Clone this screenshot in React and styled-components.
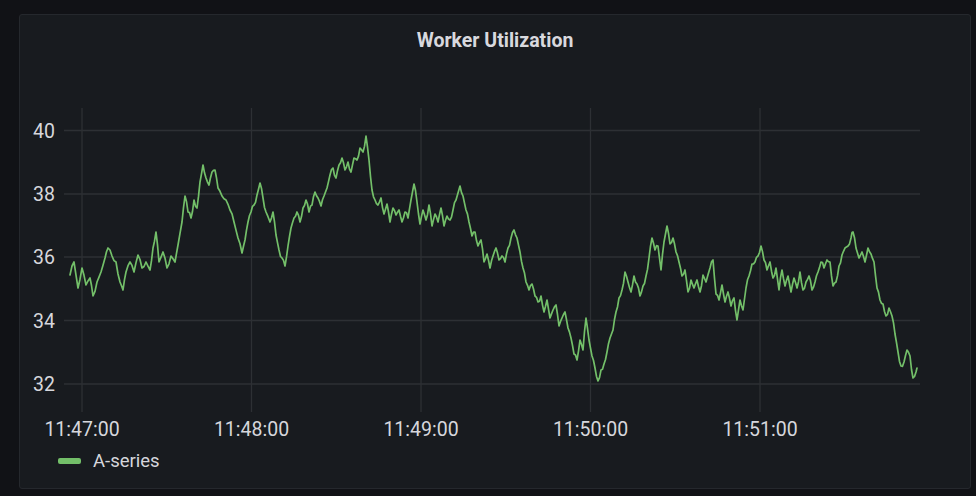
import React from "react";
import styled, { createGlobalStyle } from "styled-components";

const Global = createGlobalStyle`
  html, body { margin: 0; padding: 0; background: #111216; }
  body { font-family: Roboto, "Liberation Sans", sans-serif; }
`;

const Page = styled.div`
  width: 976px;
  height: 496px;
  box-sizing: border-box;
  padding: 14px 5px 0 19px;
  background: #111216;
`;

const Panel = styled.div`
  width: 952px;
  height: 475px;
  box-sizing: border-box;
  background: #181b1f;
  border: 1px solid #25282d;
  border-radius: 3px;
  display: flex;
  flex-direction: column;
`;

const Header = styled.div`
  padding-top: 14px;
  height: 24px;
  display: flex;
  justify-content: center;
`;

const Title = styled.h2`
  margin: 0;
  font-family: Roboto, "Liberation Sans", sans-serif;
  font-weight: 700;
  font-size: 19.5px;
  line-height: 24px;
  color: #d8d9de;
`;

const ChartSvg = styled.svg`
  display: block;
  margin-top: 47px;
  flex: none;
`;

const AxisText = styled.text`
  font-family: Roboto, "Liberation Sans", sans-serif;
  font-size: 19.5px;
  fill: #d6d7dc;
`;

const Legend = styled.div`
  margin-top: 6px;
  height: 20px;
  padding-left: 38px;
  display: flex;
  align-items: center;
  gap: 12px;
`;

const Swatch = styled.span`
  width: 23px;
  height: 6px;
  border-radius: 2px;
  background: ${(p) => p.$color};
`;

const LegendLabel = styled.span`
  font-size: 18.5px;
  color: #d6d7dc;
  font-family: Roboto, "Liberation Sans", sans-serif;
`;

const KEY = [
  [70,275],[74,262],[78,288],[82,268],[86,285],[90,278],[93,296],[97,282],[101,272],[105,258],[108,248],[112,256],[116,262],[120,282],[123,290],[126,272],[130,262],[134,272],[138,255],[142,268],[146,262],[150,270],[153,248],[156,232],[159,262],[163,252],[167,268],[171,256],[175,262],[178,245],[182,222],[185,196],[188,212],[191,218],[194,200],[197,208],[200,182],[203,165],[206,178],[209,185],[212,172],[215,170],[218,188],[222,196],[226,200],[230,210],[234,222],[238,238],[242,253],[245,240],[248,222],[251,212],[254,205],[257,195],[260,183],[263,198],[266,212],[270,222],[273,212],[276,235],[279,250],[282,258],[285,266],[288,246],[291,228],[294,218],[297,212],[300,222],[303,208],[306,200],[309,212],[312,205],[315,192],[318,198],[321,206],[324,196],[327,188],[330,175],[333,168],[336,178],[339,165],[342,158],[345,170],[348,162],[351,172],[354,158],[357,160],[360,148],[363,152],[366,136],[369,160],[372,190],[375,200],[378,205],[381,198],[384,214],[387,204],[390,222],[393,208],[396,215],[399,210],[402,222],[405,212],[408,218],[411,200],[414,184],[417,202],[420,224],[423,210],[426,220],[429,205],[432,226],[435,214],[438,222],[441,208],[444,226],[447,216],[450,220],[453,210],[456,200],[460,186],[463,196],[466,210],[469,222],[472,236],[475,232],[478,246],[481,240],[484,262],[487,254],[490,268],[493,256],[496,248],[499,260],[502,256],[505,262],[508,248],[511,238],[514,230],[517,238],[520,252],[523,268],[526,282],[529,290],[532,284],[535,296],[538,302],[541,296],[544,312],[547,300],[550,318],[553,310],[556,305],[559,326],[562,318],[565,312],[568,328],[571,338],[574,354],[577,360],[580,340],[583,350],[586,318],[589,340],[592,356],[595,368],[598,381],[601,370],[604,364],[607,352],[610,338],[613,330],[616,312],[619,298],[622,290],[625,272],[628,282],[631,292],[634,276],[637,284],[640,296],[643,286],[646,276],[649,258],[652,238],[655,250],[658,246],[661,270],[664,242],[667,226],[670,244],[673,238],[676,252],[679,262],[682,276],[685,270],[688,292],[691,280],[694,288],[697,280],[700,292],[703,275],[706,282],[710,268],[713,260],[716,294],[719,300],[722,285],[725,302],[728,292],[731,306],[734,298],[737,320],[740,300],[743,310],[746,288],[749,276],[752,264],[755,262],[758,256],[761,246],[764,260],[767,270],[770,262],[773,278],[776,268],[779,290],[782,270],[785,286],[788,276],[791,292],[794,278],[797,288],[800,272],[803,290],[806,282],[809,276],[812,290],[815,282],[818,272],[821,262],[824,268],[827,260],[830,262],[833,286],[836,282],[839,266],[842,255],[845,248],[848,246],[851,238],[853,232],[856,248],[859,258],[862,252],[865,262],[868,248],[871,254],[874,262],[877,288],[880,300],[883,304],[886,316],[889,308],[892,316],[895,334],[898,352],[901,366],[904,362],[907,350],[910,356],[913,378],[916,372],[917,368]
];

function rng(seed) {
  let s = seed;
  return () => {
    s = (s * 16807) % 2147483647;
    return (s - 1) / 2147483646;
  };
}

function buildPath() {
  const r = rng(42);
  const pts = [];
  for (let i = 0; i < KEY.length - 1; i++) {
    const [x0, y0] = KEY[i];
    const [x1, y1] = KEY[i + 1];
    pts.push([x0, y0]);
    const mx = (x0 + x1) / 2;
    const my = (y0 + y1) / 2 + (r() - 0.5) * 5;
    if (x1 - x0 > 1.5) pts.push([mx, my]);
  }
  pts.push(KEY[KEY.length - 1]);
  return pts.map((p, i) => `${i ? "L" : "M"}${p[0].toFixed(1)},${p[1].toFixed(1)}`).join(" ");
}

const PATH = buildPath();

const Y_TICKS = [
  { label: "40", y: 130.5 },
  { label: "38", y: 194 },
  { label: "36", y: 257 },
  { label: "34", y: 320.5 },
  { label: "32", y: 384 },
];

const X_TICKS = [
  { label: "11:47:00", x: 82 },
  { label: "11:48:00", x: 251.5 },
  { label: "11:49:00", x: 421 },
  { label: "11:50:00", x: 590.5 },
  { label: "11:51:00", x: 760 },
];

const GRID = "#2d3034";
const GREEN = "#73bf69";

function Chart() {
  return (
    <ChartSvg width="950" height="345" viewBox="20 100 950 345">
      {Y_TICKS.map((t) => (
        <line key={t.label} x1="64" x2="920" y1={t.y} y2={t.y} stroke={GRID} strokeWidth="1.3" />
      ))}
      {X_TICKS.map((t) => (
        <line key={t.label} x1={t.x} x2={t.x} y1="108" y2="412" stroke={GRID} strokeWidth="1.3" />
      ))}
      {Y_TICKS.map((t) => (
        <AxisText key={t.label} x="55" y={t.y + 7} textAnchor="end">{t.label}</AxisText>
      ))}
      {X_TICKS.map((t) => (
        <AxisText key={t.label} x={t.x} y="436" textAnchor="middle">{t.label}</AxisText>
      ))}
      <path d={PATH} fill="none" stroke={GREEN} strokeWidth="1.7" strokeLinejoin="round" strokeLinecap="round" />
    </ChartSvg>
  );
}

export default function App() {
  return (
    <>
      <Global />
      <Page>
        <Panel>
          <Header>
            <Title>Worker Utilization</Title>
          </Header>
          <Chart />
          <Legend>
            <Swatch $color={GREEN} />
            <LegendLabel>A-series</LegendLabel>
          </Legend>
        </Panel>
      </Page>
    </>
  );
}
